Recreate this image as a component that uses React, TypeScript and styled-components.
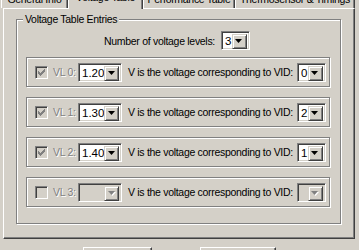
import React from 'react';
import styled, { createGlobalStyle } from 'styled-components';

const GlobalStyle = createGlobalStyle`
  html, body {
    margin: 0;
    padding: 0;
    background: #d4d0c8;
  }
  body {
    overflow: hidden;
  }
`;

const Screen = styled.div`
  width: 359px;
  height: 250px;
  overflow: hidden;
  background: #d4d0c8;
  font-family: 'Liberation Sans', Arial, sans-serif;
  font-size: 10.5px;
  letter-spacing: -0.3px;
  color: #000;
`;

const TabStrip = styled.div`
  display: flex;
  align-items: flex-end;
  height: 8px;
  padding-left: 1px;
  position: relative;
  z-index: 1;
`;

const Tab = styled.div<{ $w: number; $active?: boolean }>`
  width: ${(p) => p.$w}px;
  height: ${(p) => (p.$active ? 21 : 18)}px;
  margin-bottom: ${(p) => (p.$active ? -1 : 0)}px;
  box-sizing: border-box;
  border-top: 1px solid #fff;
  border-left: 1px solid #fff;
  border-right: 1px solid #404040;
  box-shadow: inset -1px 0 0 #808080;
  border-radius: 2px 2px 0 0;
  background: #d4d0c8;
  display: flex;
  align-items: flex-end;
  justify-content: center;
  padding-bottom: ${(p) => (p.$active ? 6 : 3)}px;
  white-space: nowrap;
  line-height: 12px;
`;

const Panel = styled.div`
  margin-left: 3px;
  width: 352px;
  height: 231px;
  box-sizing: border-box;
  border-top: 1px solid #fff;
  border-left: 1px solid #fff;
  border-right: 1px solid #404040;
  border-bottom: 1px solid #404040;
  box-shadow: inset -1px -1px 0 #808080;
  padding: 10px 0 0 12px;
`;

const GroupBox = styled.div`
  position: relative;
  width: 325px;
  height: 205px;
  box-sizing: border-box;
  border: 1px solid #808080;
  box-shadow: 1px 1px 0 #fff, inset 1px 1px 0 #fff;
  padding: 12px 0 0 9px;
`;

const Legend = styled.div`
  position: absolute;
  top: -7px;
  left: 6px;
  padding: 0 2px;
  background: #d4d0c8;
  line-height: 13px;
  white-space: nowrap;
`;

const LevelsRow = styled.div`
  display: flex;
  align-items: center;
  justify-content: center;
  gap: 6px;
  height: 17px;
  margin-right: 12px;
`;

const EntryList = styled.div`
  display: flex;
  flex-direction: column;
  gap: 10px;
  margin-top: 8px;
`;

const EntryBox = styled.div`
  width: 304px;
  height: 30px;
  box-sizing: border-box;
  border: 1px solid #808080;
  box-shadow: 1px 1px 0 #fff, inset 1px 1px 0 #fff;
  display: flex;
  align-items: center;
  padding-left: 8px;
`;

const CheckBox = styled.div`
  width: 13px;
  height: 13px;
  box-sizing: border-box;
  border-top: 1px solid #808080;
  border-left: 1px solid #808080;
  border-right: 1px solid #fff;
  border-bottom: 1px solid #fff;
  box-shadow: inset 1px 1px 0 #404040, inset -1px -1px 0 #d4d0c8;
  background: #d4d0c8;
  display: flex;
  align-items: center;
  justify-content: center;
  flex-shrink: 0;
`;

const VlLabel = styled.span`
  width: 25px;
  margin-left: 5px;
  color: #808080;
  text-shadow: 1px 1px 0 #fff;
  white-space: nowrap;
`;

const Combo = styled.div<{ $w: number; $disabled?: boolean }>`
  width: ${(p) => p.$w}px;
  height: 19px;
  box-sizing: border-box;
  display: flex;
  flex-shrink: 0;
  border-top: 1px solid #808080;
  border-left: 1px solid #808080;
  border-right: 1px solid #fff;
  border-bottom: 1px solid #fff;
  box-shadow: inset 1px 1px 0 #404040, inset -1px -1px 0 #d4d0c8;
  background: ${(p) => (p.$disabled ? '#d4d0c8' : '#fff')};
  padding: 2px;
`;

const ComboValue = styled.div`
  flex: 1;
  padding-left: 1px;
  line-height: 15px;
  font-size: 11.5px;
  letter-spacing: 0;
`;

const ComboButton = styled.div`
  width: 15px;
  height: 15px;
  box-sizing: border-box;
  border-top: 1px solid #d4d0c8;
  border-left: 1px solid #d4d0c8;
  border-right: 1px solid #404040;
  border-bottom: 1px solid #404040;
  box-shadow: inset 1px 1px 0 #fff, inset -1px -1px 0 #808080;
  background: #d4d0c8;
  display: flex;
  align-items: center;
  justify-content: center;
`;

const Caption = styled.span`
  margin-left: 6px;
  margin-right: 4px;
  white-space: nowrap;
`;

const ButtonRow = styled.div`
  display: flex;
  margin-top: 8px;
  padding-left: 83px;
  gap: 48px;
`;

const DialogButton = styled.div<{ $w: number }>`
  width: ${(p) => p.$w}px;
  height: 23px;
  box-sizing: border-box;
  border-top: 1px solid #fff;
  border-left: 1px solid #fff;
  border-right: 1px solid #404040;
  border-bottom: 1px solid #404040;
  box-shadow: inset -1px -1px 0 #808080;
  text-align: center;
  line-height: 21px;
`;

function Arrow({ disabled }: { disabled?: boolean }) {
  return (
    <svg width="8" height="5" viewBox="0 0 8 5">
      {disabled && <polygon points="1,1 8,1 4.5,5" fill="#fff" />}
      <polygon points="0,0 7,0 3.5,4" fill={disabled ? '#808080' : '#000'} />
    </svg>
  );
}

function Check() {
  return (
    <svg width="7" height="7" viewBox="0 0 7 7" shapeRendering="crispEdges">
      <path
        d="M6 0h1v1h-1zM5 1h2v1h-2zM0 2h1v1h-1zM4 2h3v1h-3zM0 3h2v1h-2zM3 3h3v1h-3zM0 4h5v1h-5zM1 5h3v1h-3zM2 6h1v1h-1z"
        fill="#808080"
      />
    </svg>
  );
}

const entries = [
  { vl: 0, voltage: '1.20', vid: '0', enabled: true },
  { vl: 1, voltage: '1.30', vid: '2', enabled: true },
  { vl: 2, voltage: '1.40', vid: '1', enabled: true },
  { vl: 3, voltage: '', vid: '', enabled: false },
];

export default function App() {
  return (
    <Screen>
      <GlobalStyle />
      <TabStrip>
        <Tab $w={67}>General Info</Tab>
        <Tab $w={75} $active>Voltage Table</Tab>
        <Tab $w={92}>Performance Table</Tab>
        <Tab $w={120}>Thermosensor &amp; Timings</Tab>
      </TabStrip>
      <Panel>
        <GroupBox>
          <Legend>Voltage Table Entries</Legend>
          <LevelsRow>
            <span>Number of voltage levels:</span>
            <Combo $w={29}>
              <ComboValue>3</ComboValue>
              <ComboButton>
                <Arrow />
              </ComboButton>
            </Combo>
          </LevelsRow>
          <EntryList>
            {entries.map((e) => (
              <EntryBox key={e.vl}>
                <CheckBox>{e.enabled && <Check />}</CheckBox>
                <VlLabel>VL {e.vl}:</VlLabel>
                <Combo $w={44} $disabled={!e.enabled}>
                  <ComboValue>{e.voltage}</ComboValue>
                  <ComboButton>
                    <Arrow disabled={!e.enabled} />
                  </ComboButton>
                </Combo>
                <Caption>V is the voltage corresponding to VID:</Caption>
                <Combo $w={29} $disabled={!e.enabled}>
                  <ComboValue>{e.vid}</ComboValue>
                  <ComboButton>
                    <Arrow disabled={!e.enabled} />
                  </ComboButton>
                </Combo>
              </EntryBox>
            ))}
          </EntryList>
        </GroupBox>
      </Panel>
      <ButtonRow>
        <DialogButton $w={69}>OK</DialogButton>
        <DialogButton $w={76}>Cancel</DialogButton>
      </ButtonRow>
    </Screen>
  );
}
